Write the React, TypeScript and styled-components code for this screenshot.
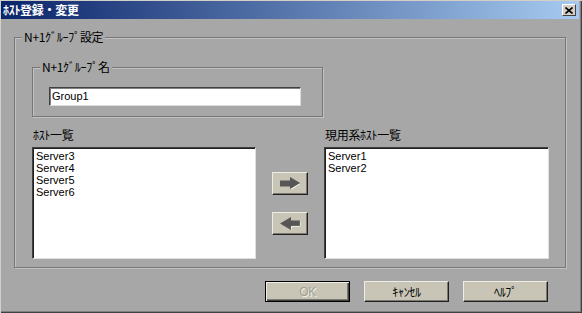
import React from "react";
import styled, { createGlobalStyle } from "styled-components";

const GlobalStyle = createGlobalStyle`
  html, body {
    margin: 0;
    padding: 0;
    background: #a7a7a7;
  }
  body {
    font-family: "Noto Sans CJK JP", "Liberation Sans", sans-serif;
    font-size: 12px;
    color: #000;
  }
`;

const Window = styled.div`
  width: 582px;
  height: 313px;
  box-sizing: border-box;
  padding: 1px 3px 0 1px;
  background: #a7a7a7;
  box-shadow: inset 1px 1px 0 #d4d0c8, inset -1px -1px 0 #404040,
    inset -2px -2px 0 #808080;
  display: flex;
  flex-direction: column;
`;

const TitleBar = styled.div`
  height: 18px;
  display: flex;
  align-items: center;
  justify-content: space-between;
  padding: 0 3px 0 2px;
  background: linear-gradient(to right, #0a246a, #a6caf0);
`;

const Title = styled.span`
  color: #fff;
  font-weight: bold;
  font-size: 12px;
  line-height: 14px;
  letter-spacing: -0.3px;
`;

const CloseButton = styled.div`
  width: 14px;
  height: 12px;
  box-sizing: border-box;
  background: #d4d0c8;
  border: 1px solid;
  border-color: #fff #404040 #404040 #fff;
  display: flex;
  align-items: center;
  justify-content: center;
`;

const Body = styled.div`
  flex: 1;
  padding: 18px 0 0 13px;
  display: flex;
  flex-direction: column;
`;

const GroupBox = styled.div<{ $w: number; $h: number; $pad: string }>`
  position: relative;
  width: ${(p) => p.$w}px;
  height: ${(p) => p.$h}px;
  box-sizing: border-box;
  border: 1px solid #777;
  box-shadow: inset 1px 1px 0 #c2c2c2, 1px 1px 0 #c2c2c2;
  padding: ${(p) => p.$pad};
  display: flex;
  flex-direction: column;
  align-items: flex-start;
`;

const GroupLabel = styled.span`
  position: absolute;
  top: -8px;
  left: 7px;
  padding: 0 2px;
  line-height: 14px;
  font-size: 12px;
  background: #a7a7a7;
  letter-spacing: -0.3px;
`;

const TextInput = styled.div`
  width: 252px;
  height: 19px;
  box-sizing: border-box;
  background: #fff;
  border: 1px solid;
  border-color: #404040 #dcdcdc #dcdcdc #404040;
  box-shadow: inset 1px 1px 0 #808080;
  padding: 2px 0 0 2px;
  font-family: "Liberation Sans", Arial, sans-serif;
  font-size: 11px;
  line-height: 13px;
`;

const ListRow = styled.div`
  margin-top: 11px;
  display: flex;
  gap: 16px;
`;

const ListColumn = styled.div<{ $w: number }>`
  width: ${(p) => p.$w}px;
  display: flex;
  flex-direction: column;
`;

const ListLabel = styled.span`
  line-height: 14px;
  margin-bottom: 5px;
  padding-left: 1px;
  letter-spacing: -0.3px;
`;

const ListBox = styled.div`
  height: 112px;
  box-sizing: border-box;
  background: #fff;
  border: 1px solid;
  border-color: #404040 #e0e0e0 #e0e0e0 #404040;
  box-shadow: inset 1px 1px 0 #202020;
  padding: 2px 3px;
  font-family: "Liberation Sans", Arial, sans-serif;
  font-size: 11px;
  line-height: 12px;
`;

const MoveColumn = styled.div`
  align-self: flex-end;
  height: 112px;
  display: flex;
  flex-direction: column;
  justify-content: center;
  gap: 17px;
`;

const ArrowButton = styled.div`
  width: 36px;
  height: 23px;
  box-sizing: border-box;
  background: #c8c5b6;
  border: 1px solid;
  border-color: #eeece4 #202020 #202020 #eeece4;
  box-shadow: inset -1px -1px 0 #7a7a72;
  display: flex;
  align-items: center;
  justify-content: center;
`;

const Footer = styled.div`
  margin-top: 13px;
  padding-right: 31px;
  display: flex;
  justify-content: flex-end;
  gap: 14px;
`;

const PushButton = styled.div<{ $default?: boolean; $disabled?: boolean }>`
  width: 85px;
  height: 21px;
  box-sizing: border-box;
  background: #c8c5b6;
  border: 1px solid;
  border-color: ${(p) =>
    p.$default ? "#000" : "#eeece4 #202020 #202020 #eeece4"};
  box-shadow: ${(p) =>
    p.$default
      ? "inset 1px 1px 0 #eeece4, inset -1px -1px 0 #404040, inset -2px -2px 0 #7a7a72"
      : "inset -1px -1px 0 #7a7a72"};
  display: flex;
  align-items: center;
  justify-content: center;
  font-size: 12px;
  line-height: 14px;
  letter-spacing: -0.3px;
  color: ${(p) => (p.$disabled ? "#a09e92" : "#000")};
  text-shadow: ${(p) => (p.$disabled ? "1px 1px 0 #f2f0e8" : "none")};
  font-family: ${(p) =>
    p.$disabled
      ? '"Liberation Sans", Arial, sans-serif'
      : '"Noto Sans CJK JP", sans-serif'};
`;

const RightArrow = () => (
  <svg width="21" height="13" viewBox="0 0 21 13">
    <path d="M0 3.5H10V0L21 6.5L10 13V9.5H0Z" fill="#565656" />
    <path d="M10.5 12.4L20.4 6.6" stroke="#f4f2ea" strokeWidth="1.2" />
  </svg>
);

const LeftArrow = () => (
  <svg width="21" height="13" viewBox="0 0 21 13">
    <path d="M21 3.5H11V0L0 6.5L11 13V9.5H21Z" fill="#565656" />
    <path d="M20.4 3.5V9.4H11.4V12.3" stroke="#f4f2ea" strokeWidth="1" fill="none" />
  </svg>
);

const hosts = ["Server3", "Server4", "Server5", "Server6"];
const activeHosts = ["Server1", "Server2"];

const App = () => (
  <>
    <GlobalStyle />
    <Window>
      <TitleBar>
        <Title>ﾎｽﾄ登録・変更</Title>
        <CloseButton>
          <svg width="8" height="7" viewBox="0 0 8 7">
            <path d="M0.5 0.5L7.5 6.5M7.5 0.5L0.5 6.5" stroke="#000" strokeWidth="1.6" />
          </svg>
        </CloseButton>
      </TitleBar>
      <Body>
        <GroupBox $w={552} $h={231} $pad="29px 0 0 17px">
          <GroupLabel>N+1ｸﾞﾙｰﾌﾟ設定</GroupLabel>
          <GroupBox $w={291} $h={50} $pad="19px 0 0 16px">
            <GroupLabel>N+1ｸﾞﾙｰﾌﾟ名</GroupLabel>
            <TextInput>Group1</TextInput>
          </GroupBox>
          <ListRow>
            <ListColumn $w={224}>
              <ListLabel>ﾎｽﾄ一覧</ListLabel>
              <ListBox>
                {hosts.map((h) => (
                  <div key={h}>{h}</div>
                ))}
              </ListBox>
            </ListColumn>
            <MoveColumn>
              <ArrowButton>
                <RightArrow />
              </ArrowButton>
              <ArrowButton>
                <LeftArrow />
              </ArrowButton>
            </MoveColumn>
            <ListColumn $w={225}>
              <ListLabel>現用系ﾎｽﾄ一覧</ListLabel>
              <ListBox>
                {activeHosts.map((h) => (
                  <div key={h}>{h}</div>
                ))}
              </ListBox>
            </ListColumn>
          </ListRow>
        </GroupBox>
        <Footer>
          <PushButton $default $disabled>
            OK
          </PushButton>
          <PushButton>ｷｬﾝｾﾙ</PushButton>
          <PushButton>ﾍﾙﾌﾟ</PushButton>
        </Footer>
      </Body>
    </Window>
  </>
);

export default App;
